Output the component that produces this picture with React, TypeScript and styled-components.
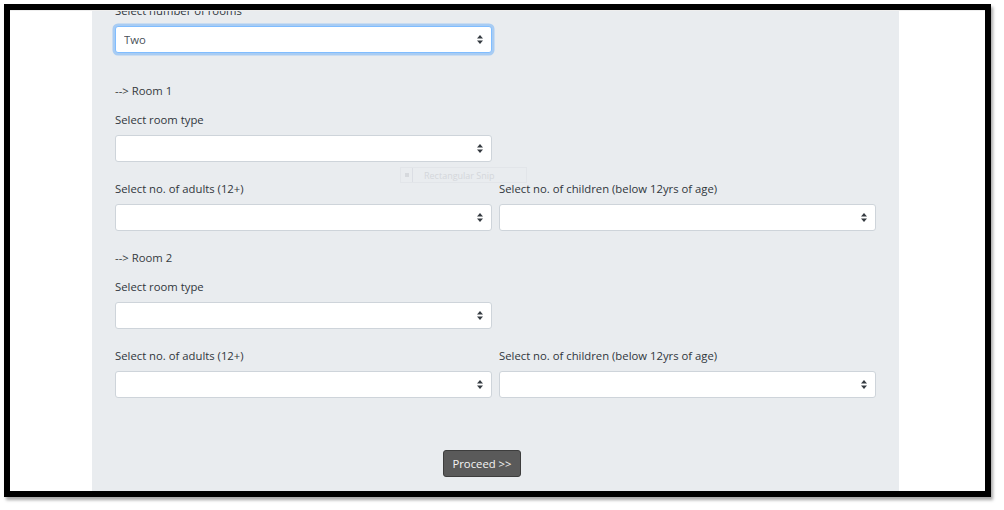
import React from "react";
import styled, { createGlobalStyle, css } from "styled-components";

const GlobalStyle = createGlobalStyle`
  html, body { margin: 0; padding: 0; background: #ffffff; }
  body { font-family: "Open Sans", "Noto Sans", sans-serif; }
  * { box-sizing: border-box; }
`;

const Page = styled.div`
  width: 1004px;
  height: 510px;
  padding: 4px 13px 13px 4px;
  background: #ffffff;
`;

const Frame = styled.div`
  width: 987px;
  height: 493px;
  border: 6px solid #000000;
  box-shadow: 2px 3px 3px rgba(0, 0, 0, 0.35);
  background: #ffffff;
  overflow: hidden;
  position: relative;
`;

const Screen = styled.div`
  height: 100%;
  border-top: 1px solid #eeeeee;
  padding-left: 82px;
  display: flex;
`;

const Panel = styled.div`
  width: 807px;
  height: 100%;
  background: #e9ecef;
  padding: 0 23px 0 23px;
  overflow: hidden;
  display: flex;
  flex-direction: column;
`;

const Content = styled.div`
  margin-top: -9px;
  display: flex;
  flex-direction: column;
`;

const Field = styled.div<{ $half?: boolean; $gapAfter?: number }>`
  display: flex;
  flex-direction: column;
  width: ${(p) => (p.$half ? "377px" : "100%")};
  margin-bottom: ${(p) => p.$gapAfter ?? 18}px;
`;

const Label = styled.div`
  font-size: 11.3px;
  line-height: 18px;
  height: 18px;
  color: #30363c;
  margin-bottom: 6px;
  white-space: nowrap;
`;

const Heading = styled.div`
  font-size: 11.3px;
  line-height: 18px;
  height: 18px;
  color: #363b40;
  margin-bottom: 11px;
`;

const SelectWrap = styled.div`
  position: relative;
  width: 100%;
`;

const SelectBox = styled.select<{ $focused?: boolean }>`
  appearance: none;
  -webkit-appearance: none;
  width: 100%;
  height: 27px;
  padding: 0 24px 0 8px;
  font-family: "Open Sans", "Noto Sans", sans-serif;
  font-size: 11.3px;
  color: #495057;
  background: #ffffff;
  border: 1px solid #ced4da;
  border-radius: 3px;
  outline: none;
  ${(p) =>
    p.$focused &&
    css`
      border-color: #80bdff;
      box-shadow: 0 0 0 2.5px rgba(0, 123, 255, 0.28);
    `}
`;

const Caret = styled.svg`
  position: absolute;
  right: 9px;
  top: 9px;
  width: 6px;
  height: 9px;
  pointer-events: none;
`;

const Row = styled.div`
  display: grid;
  grid-template-columns: 377px 377px;
  column-gap: 7px;
`;

const Footer = styled.div`
  display: flex;
  padding-left: 328px;
  margin-top: 34px;
`;

const Button = styled.button`
  height: 27px;
  width: 78px;
  padding: 0;
  font-family: "Open Sans", "Noto Sans", sans-serif;
  font-size: 11.3px;
  color: #f4f4f4;
  background: #5a5a5a;
  border: 1px solid #3d3d3d;
  border-radius: 3px;
`;

const Snip = styled.div`
  position: absolute;
  left: 390px;
  top: 157px;
  width: 127px;
  height: 16px;
  display: flex;
  align-items: center;
  gap: 11px;
  border: 1px solid rgba(220, 224, 228, 0.55);
  font-family: "Open Sans", "Noto Sans", sans-serif;
  font-size: 9px;
  color: #d4d7db;
  pointer-events: none;
`;

const SnipIcon = styled.div`
  width: 12px;
  height: 14px;
  border-right: 1px solid rgba(210, 214, 220, 0.6);
  display: flex;
  align-items: center;
  justify-content: center;
  &::after {
    content: "";
    width: 4px;
    height: 4px;
    background: #d6d9dd;
  }
`;

type SelectProps = { value?: string; focused?: boolean };

function Select({ value, focused }: SelectProps) {
  return (
    <SelectWrap>
      <SelectBox $focused={focused} defaultValue={value ?? ""}>
        {value ? <option value={value}>{value}</option> : <option value="" />}
      </SelectBox>
      <Caret viewBox="0 0 6 9">
        <path d="M3 0 L6 3.6 L0 3.6 Z" fill="#343a40" />
        <path d="M3 9 L6 5.4 L0 5.4 Z" fill="#343a40" />
      </Caret>
    </SelectWrap>
  );
}

function Room({ n }: { n: number }) {
  return (
    <>
      <Heading>--&gt; Room {n}</Heading>
      <Field $half>
        <Label>Select room type</Label>
        <Select />
      </Field>
      <Row>
        <Field>
          <Label>Select no. of adults (12+)</Label>
          <Select />
        </Field>
        <Field>
          <Label>Select no. of children (below 12yrs of age)</Label>
          <Select />
        </Field>
      </Row>
    </>
  );
}

export default function App() {
  return (
    <>
      <GlobalStyle />
      <Page>
        <Frame>
          <Screen>
            <Panel>
              <Content>
                <Field $half $gapAfter={29}>
                  <Label>Select number of rooms</Label>
                  <Select value="Two" focused />
                </Field>
                <Room n={1} />
                <Room n={2} />
                <Footer>
                  <Button>Proceed &gt;&gt;</Button>
                </Footer>
              </Content>
            </Panel>
          </Screen>
          <Snip>
            <SnipIcon />
            Rectangular Snip
          </Snip>
        </Frame>
      </Page>
    </>
  );
}
